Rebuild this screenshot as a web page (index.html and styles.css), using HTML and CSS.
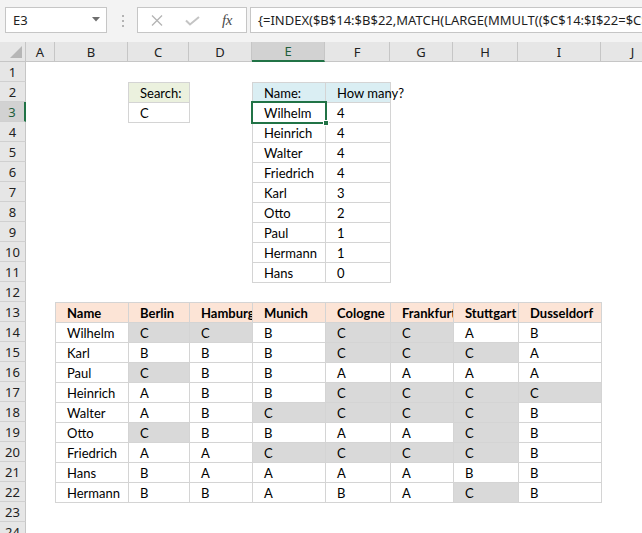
FILE: index.html
```html
<!DOCTYPE html>
<html>
<head>
<meta charset="utf-8">
<link rel="stylesheet" href="styles.css">
</head>
<body>
<div class="app">
  <div class="toolbar">
    <div class="namebox">
      <span class="nb-text">E3</span>
      <svg class="nb-arrow" width="8" height="5" viewBox="0 0 8 5"><path d="M0 0 H8 L4 4.5 Z" fill="#6e6e6e"/></svg>
    </div>
    <svg class="grip" width="3" height="13" viewBox="0 0 3 13"><rect x="0" y="0" width="2" height="2" fill="#b3b3b3"/><rect x="0" y="5" width="2" height="2" fill="#b3b3b3"/><rect x="0" y="10" width="2" height="2" fill="#b3b3b3"/></svg>
    <div class="fbtns">
      <svg class="ic-x" width="12" height="11" viewBox="0 0 12 11"><path d="M1 0.5 L11 10.5 M11 0.5 L1 10.5" stroke="#b4b4b4" stroke-width="1.3" fill="none"/></svg>
      <svg class="ic-check" width="15" height="10" viewBox="0 0 15 10"><path d="M1 4.5 L5 8.5 L14 1" stroke="#c4c4c4" stroke-width="2" fill="none"/></svg>
      <span class="fx">fx</span>
    </div>
    <div class="formula">{=INDEX($B$14:$B$22,MATCH(LARGE(MMULT(($C$14:$I$22=$C$3)*1,TRANSPOSE(COLUMN($C$13:$I$13)^0))+1/ROW($B$14:$B$22),ROWS($A$1:A1)),MMULT(($C$14:$I$22=$C$3)*1,TRANSPOSE(COLUMN($C$13:$I$13)^0))+1/ROW($B$14:$B$22),0))}</div>
  </div>

  <div class="sheet">
    <div class="corner"><svg width="12" height="12" viewBox="0 0 12 12"><path d="M12 0 V12 H0 Z" fill="#b6b6b6"/></svg></div>
    <div class="ch">A</div>
    <div class="ch">B</div>
    <div class="ch">C</div>
    <div class="ch">D</div>
    <div class="ch ch-sel">E</div>
    <div class="ch">F</div>
    <div class="ch">G</div>
    <div class="ch">H</div>
    <div class="ch">I</div>
    <div class="ch">J</div>

    <div class="rh">1</div>
    <div class="rh">2</div>
    <div class="rh rh-sel">3</div>
    <div class="rh">4</div>
    <div class="rh">5</div>
    <div class="rh">6</div>
    <div class="rh">7</div>
    <div class="rh">8</div>
    <div class="rh">9</div>
    <div class="rh">10</div>
    <div class="rh">11</div>
    <div class="rh">12</div>
    <div class="rh">13</div>
    <div class="rh">14</div>
    <div class="rh">15</div>
    <div class="rh">16</div>
    <div class="rh">17</div>
    <div class="rh">18</div>
    <div class="rh">19</div>
    <div class="rh">20</div>
    <div class="rh">21</div>
    <div class="rh">22</div>
    <div class="rh">23</div>
    <div class="rh">24</div>

    <div class="tbl t-search">
      <div class="c hd-green">Search:</div>
      <div class="c">C</div>
    </div>

    <div class="tbl t-names">
      <div class="c hd-blue">Name:</div><div class="c hd-blue ov">How many?</div>
      <div class="c sel">Wilhelm<span class="handle"></span></div><div class="c">4</div>
      <div class="c">Heinrich</div><div class="c">4</div>
      <div class="c">Walter</div><div class="c">4</div>
      <div class="c">Friedrich</div><div class="c">4</div>
      <div class="c">Karl</div><div class="c">3</div>
      <div class="c">Otto</div><div class="c">2</div>
      <div class="c">Paul</div><div class="c">1</div>
      <div class="c">Hermann</div><div class="c">1</div>
      <div class="c">Hans</div><div class="c">0</div>
    </div>

    <div class="tbl t-data">
      <div class="c hd-orange">Name</div><div class="c hd-orange">Berlin</div><div class="c hd-orange">Hamburg</div><div class="c hd-orange">Munich</div><div class="c hd-orange">Cologne</div><div class="c hd-orange">Frankfurt</div><div class="c hd-orange">Stuttgart</div><div class="c hd-orange">Dusseldorf</div>
      <div class="c">Wilhelm</div><div class="c g">C</div><div class="c g">C</div><div class="c">B</div><div class="c g">C</div><div class="c g">C</div><div class="c">A</div><div class="c">B</div>
      <div class="c">Karl</div><div class="c">B</div><div class="c">B</div><div class="c">B</div><div class="c g">C</div><div class="c g">C</div><div class="c g">C</div><div class="c">A</div>
      <div class="c">Paul</div><div class="c g">C</div><div class="c">B</div><div class="c">B</div><div class="c">A</div><div class="c">A</div><div class="c">A</div><div class="c">A</div>
      <div class="c">Heinrich</div><div class="c">A</div><div class="c">B</div><div class="c">B</div><div class="c g">C</div><div class="c g">C</div><div class="c g">C</div><div class="c g">C</div>
      <div class="c">Walter</div><div class="c">A</div><div class="c">B</div><div class="c g">C</div><div class="c g">C</div><div class="c g">C</div><div class="c g">C</div><div class="c">B</div>
      <div class="c">Otto</div><div class="c g">C</div><div class="c">B</div><div class="c">B</div><div class="c">A</div><div class="c">A</div><div class="c g">C</div><div class="c">B</div>
      <div class="c">Friedrich</div><div class="c">A</div><div class="c">A</div><div class="c g">C</div><div class="c g">C</div><div class="c g">C</div><div class="c g">C</div><div class="c">B</div>
      <div class="c">Hans</div><div class="c">B</div><div class="c">A</div><div class="c">A</div><div class="c">A</div><div class="c">A</div><div class="c">B</div><div class="c">B</div>
      <div class="c">Hermann</div><div class="c">B</div><div class="c">B</div><div class="c">A</div><div class="c">B</div><div class="c">A</div><div class="c g">C</div><div class="c">B</div>
    </div>
  </div>
</div>
</body>
</html>
```

FILE: styles.css
```css
* { box-sizing: border-box; }
html, body { margin: 0; padding: 0; background: #ffffff; }
body { overflow: hidden; width: 642px; height: 533px; }

.app {
  width: 642px;
  height: 533px;
  overflow: hidden;
  display: flex;
  flex-direction: column;
  font-family: "Noto Sans", "DejaVu Sans", sans-serif;
}

/* ---------- toolbar ---------- */
.toolbar {
  height: 42px;
  flex: none;
  background: #f3f3f3;
  display: flex;
  align-items: flex-start;
  padding: 7px 0 0 5px;
}
.namebox {
  width: 102px;
  height: 26px;
  background: #fff;
  border: 1px solid #c6c6c6;
  display: flex;
  align-items: center;
  justify-content: space-between;
  padding: 0 6px 0 7px;
  color: #222;
  font-size: 13px;
}
.nb-arrow { margin-top: -1px; }
.grip { margin: 8px 0 0 15px; }
.fbtns {
  margin-left: 12px;
  width: 110px;
  height: 26px;
  background: #fff;
  border: 1px solid #c6c6c6;
  display: flex;
  align-items: center;
  padding-left: 13px;
}
.ic-x { margin-top: 1px; }
.ic-check { margin-left: 22px; margin-top: 2px; }
.fx {
  margin-left: 22px;
  font-family: "Liberation Serif", serif;
  font-style: italic;
  font-size: 15px;
  color: #4a4a4a;
  letter-spacing: -0.5px;
}
.formula {
  margin-left: 3px;
  flex: 1;
  min-width: 0;
  height: 26px;
  background: #fff;
  border: 1px solid #c6c6c6;
  border-right: none;
  padding-left: 7px;
  display: flex;
  align-items: center;
  white-space: nowrap;
  overflow: hidden;
  font-size: 13px;
  color: #1e1e1e;
}

/* ---------- sheet ---------- */
.sheet {
  flex: 1;
  display: grid;
  grid-template-columns: 26px 29px 73px 61px 63px 73px 65px 63px 65px 83px 64px;
  grid-template-rows: repeat(25, 20px);
  background: #fff;
  font-family: "Lato", "Noto Sans", sans-serif;
}
.corner {
  grid-row: 1;
  grid-column: 1;
  background: #e6e6e6;
  border-right: 1px solid #c6c6c6;
  border-bottom: 1px solid #c6c6c6;
  display: flex;
  align-items: flex-end;
  justify-content: flex-end;
  padding: 0 3px 3px 0;
}
.ch {
  grid-row: 1;
  background: #e6e6e6;
  border-right: 1px solid #c6c6c6;
  border-bottom: 1px solid #c6c6c6;
  display: flex;
  align-items: center;
  justify-content: center;
  font-family: "Noto Sans", sans-serif;
  font-size: 13px;
  color: #222;
}
.ch-sel {
  background: #d2d2d2;
  border-bottom: 2px solid #217346;
  color: #1f5e3c;
}
.rh {
  grid-column: 1;
  background: #e6e6e6;
  border-right: 1px solid #c6c6c6;
  border-bottom: 1px solid #d0d0d0;
  display: flex;
  align-items: center;
  justify-content: center;
  font-family: "Noto Sans", sans-serif;
  font-size: 13px;
  color: #222;
}
.rh-sel {
  background: #d2d2d2;
  border-right: 2px solid #217346;
  color: #1f5e3c;
}

/* ---------- tables ---------- */
.tbl {
  display: grid;
  grid-auto-rows: 19px;
  gap: 1px;
  background: #d4d4d4;
  border: 1px solid #d4d4d4;
  justify-self: start;
  align-self: start;
  font-size: 13px;
  color: #000;
}
.t-search {
  grid-column: 4;
  grid-row: 3 / span 2;
  grid-template-columns: 60px;
}
.t-names {
  grid-column: 6 / span 2;
  grid-row: 3 / span 10;
  grid-template-columns: 72px 64px;
}
.t-data {
  grid-column: 3 / span 8;
  grid-row: 14 / span 10;
  grid-template-columns: 72px 60px 62px 72px 64px 62px 64px 82px;
}
.c {
  background: #fff;
  padding: 1px 0 0 11px;
  display: flex;
  align-items: center;
  white-space: nowrap;
  overflow: hidden;
}
.c.ov { overflow: visible; }
.hd-green { background: #ebf1de; }
.hd-blue { background: #daeef3; }
.hd-orange { background: #fce4d6; font-weight: bold; }
.g { background: #d9d9d9; }

.sel { position: relative; overflow: visible; }
.sel::after {
  content: "";
  position: absolute;
  top: -2px;
  left: -2px;
  right: -2px;
  bottom: -2px;
  border: 2px solid #217346;
  z-index: 2;
}
.handle {
  position: absolute;
  right: -4px;
  bottom: -4px;
  width: 6px;
  height: 6px;
  background: #217346;
  border: 1px solid #fff;
  z-index: 3;
}
```
